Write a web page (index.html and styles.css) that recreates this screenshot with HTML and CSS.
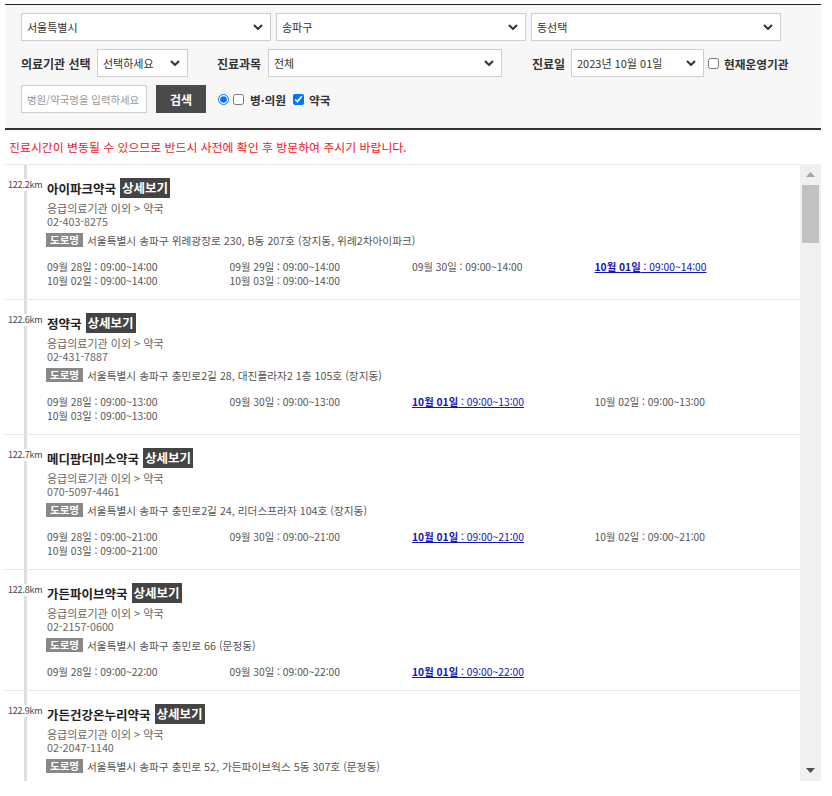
FILE: index.html
```html
<!DOCTYPE html>
<html lang="ko">
<head>
<meta charset="utf-8">
<title>의료기관 찾기</title>
<link rel="stylesheet" href="styles.css">
</head>
<body>
<div class="page">
  <form class="search">
    <div class="row">
      <select class="sel sel-region"><option>서울특별시</option></select>
      <select class="sel sel-region"><option>송파구</option></select>
      <select class="sel sel-region"><option>동선택</option></select>
    </div>
    <div class="row">
      <label class="lbl lbl-type">의료기관 선택</label>
      <select class="sel sel-type"><option>선택하세요</option></select>
      <label class="lbl lbl-dept">진료과목</label>
      <select class="sel sel-dept"><option>전체</option></select>
      <label class="lbl lbl-date">진료일</label>
      <select class="sel sel-date"><option>2023년 10월 01일</option></select>
      <input type="checkbox" class="chk chk-open" id="open">
      <label class="chk-text" for="open">현재운영기관</label>
    </div>
    <div class="row">
      <input type="text" class="txt" placeholder="병원/약국명을 입력하세요">
      <button type="button" class="btn">검색</button>
      <input type="radio" class="rad" checked>
      <input type="checkbox" class="chk chk-hosp" id="hosp">
      <label class="chk-text chk-text-hosp" for="hosp">병·의원</label>
      <input type="checkbox" class="chk chk-pharm" id="pharm" checked>
      <label class="chk-text" for="pharm">약국</label>
    </div>
  </form>

  <p class="notice">진료시간이 변동될 수 있으므로 반드시 사전에 확인 후 방문하여 주시기 바랍니다.</p>

  <div class="results">
    <ul class="list">
      <li class="item">
        <div class="item-body">
          <span class="dist">122.2km</span>
          <div class="title"><strong class="name">아이파크약국</strong><a class="detail">상세보기</a></div>
          <p class="cat">응급의료기관 이외 &gt; 약국</p>
          <p class="tel">02-403-8275</p>
          <p class="addr"><span class="road">도로명</span>서울특별시 송파구 위례광장로 230, B동 207호 (장지동, 위례2차아이파크)</p>
          <ul class="sched">
            <li>09월 28일 : 09:00~14:00</li>
            <li>09월 29일 : 09:00~14:00</li>
            <li>09월 30일 : 09:00~14:00</li>
            <li><a class="today"><b>10월 01일</b> : 09:00~14:00</a></li>
            <li>10월 02일 : 09:00~14:00</li>
            <li>10월 03일 : 09:00~14:00</li>
          </ul>
        </div>
      </li>
      <li class="item">
        <div class="item-body">
          <span class="dist">122.6km</span>
          <div class="title"><strong class="name">정약국</strong><a class="detail">상세보기</a></div>
          <p class="cat">응급의료기관 이외 &gt; 약국</p>
          <p class="tel">02-431-7887</p>
          <p class="addr"><span class="road">도로명</span>서울특별시 송파구 충민로2길 28, 대진플라자2 1층 105호 (장지동)</p>
          <ul class="sched">
            <li>09월 28일 : 09:00~13:00</li>
            <li>09월 30일 : 09:00~13:00</li>
            <li><a class="today"><b>10월 01일</b> : 09:00~13:00</a></li>
            <li>10월 02일 : 09:00~13:00</li>
            <li>10월 03일 : 09:00~13:00</li>
          </ul>
        </div>
      </li>
      <li class="item">
        <div class="item-body">
          <span class="dist">122.7km</span>
          <div class="title"><strong class="name">메디팜더미소약국</strong><a class="detail">상세보기</a></div>
          <p class="cat">응급의료기관 이외 &gt; 약국</p>
          <p class="tel">070-5097-4461</p>
          <p class="addr"><span class="road">도로명</span>서울특별시 송파구 충민로2길 24, 리더스프라자 104호 (장지동)</p>
          <ul class="sched">
            <li>09월 28일 : 09:00~21:00</li>
            <li>09월 30일 : 09:00~21:00</li>
            <li><a class="today"><b>10월 01일</b> : 09:00~21:00</a></li>
            <li>10월 02일 : 09:00~21:00</li>
            <li>10월 03일 : 09:00~21:00</li>
          </ul>
        </div>
      </li>
      <li class="item">
        <div class="item-body">
          <span class="dist">122.8km</span>
          <div class="title"><strong class="name">가든파이브약국</strong><a class="detail">상세보기</a></div>
          <p class="cat">응급의료기관 이외 &gt; 약국</p>
          <p class="tel">02-2157-0600</p>
          <p class="addr"><span class="road">도로명</span>서울특별시 송파구 충민로 66 (문정동)</p>
          <ul class="sched">
            <li>09월 28일 : 09:00~22:00</li>
            <li>09월 30일 : 09:00~22:00</li>
            <li><a class="today"><b>10월 01일</b> : 09:00~22:00</a></li>
          </ul>
        </div>
      </li>
      <li class="item">
        <div class="item-body">
          <span class="dist">122.9km</span>
          <div class="title"><strong class="name">가든건강온누리약국</strong><a class="detail">상세보기</a></div>
          <p class="cat">응급의료기관 이외 &gt; 약국</p>
          <p class="tel">02-2047-1140</p>
          <p class="addr"><span class="road">도로명</span>서울특별시 송파구 충민로 52, 가든파이브웍스 5동 307호 (문정동)</p>
        </div>
      </li>
    </ul>
    <div class="scrollbar" aria-hidden="true">
      <span class="sb-btn">
        <svg width="9" height="5" viewBox="0 0 9 5"><path d="M0 5L4.5 0 9 5z" fill="#a3a3a3"/></svg>
      </span>
      <span class="sb-track"><span class="sb-thumb"></span></span>
      <span class="sb-btn">
        <svg width="9" height="5" viewBox="0 0 9 5"><path d="M0 0h9L4.5 5z" fill="#505050"/></svg>
      </span>
    </div>
  </div>
</div>
</body>
</html>
```

FILE: styles.css
```css
* { box-sizing: border-box; }

body {
  margin: 0;
  background: #fff;
  color: #333;
  font-family: "Noto Sans CJK KR", "Noto Sans", sans-serif;
  font-size: 11px;
}

.page {
  padding: 4px 11px 0 5px;
}

/* ---------- search panel ---------- */
.search {
  background: #f7f7f7;
  border-top: 1px solid #222;
  border-bottom: 2px solid #333;
  padding: 8px 16px 15px;
  display: flex;
  flex-direction: column;
  gap: 8px;
}

.row {
  display: flex;
  align-items: center;
  height: 28px;
}

.sel {
  -webkit-appearance: none;
  appearance: none;
  height: 28px;
  border: 1px solid #cfcfcf;
  border-radius: 0;
  background: #fff url("data:image/svg+xml,%3Csvg xmlns='http://www.w3.org/2000/svg' width='10' height='6'%3E%3Cpath d='M1 1l4 4 4-4' fill='none' stroke='%23333' stroke-width='2'/%3E%3C/svg%3E") no-repeat right 7px center;
  background-size: 10px 6px;
  padding: 0 20px 0 5px;
  font-family: inherit;
  font-size: 11px;
  color: #333;
  outline: none;
}

.sel-region { width: 250px; margin-right: 5px; }
.sel-type { width: 91px; }
.sel-dept { width: 234px; }
.sel-date { width: 133px; }

.lbl {
  font-weight: bold;
  font-size: 12px;
  color: #333;
  white-space: nowrap;
}
.lbl-type { width: 76px; }
.lbl-dept { width: 51px; margin-left: 29px; }
.lbl-date { width: 39px; margin-left: 30px; }

.chk, .rad {
  width: 11px;
  height: 11px;
  margin: 0;
  flex: none;
}
.chk-open { margin-left: 4px; }
.rad { margin-left: 12px; }
.chk-hosp { margin-left: 4px; }
.chk-pharm { margin-left: 7px; }

.chk-text {
  font-weight: bold;
  font-size: 11.7px;
  color: #333;
  margin-left: 5px;
  white-space: nowrap;
}
.chk-text-hosp { margin-left: 6px; }

.txt {
  width: 126px;
  height: 28px;
  border: 1px solid #cfcfcf;
  background: #fff;
  padding: 0 3px 0 5px;
  font-family: inherit;
  font-size: 10.4px;
  color: #333;
  outline: none;
}
.txt::placeholder { color: #999; }

.btn {
  width: 50px;
  height: 28px;
  margin-left: 9px;
  border: 0;
  background: #4a4a4a;
  color: #fff;
  font-family: inherit;
  font-weight: bold;
  font-size: 12px;
  padding: 0;
}

/* ---------- notice ---------- */
.notice {
  margin: 0;
  padding: 9px 4px;
  line-height: 16px;
  color: #f0141e;
  font-size: 11.9px;
  white-space: nowrap;
}

/* ---------- result list ---------- */
.results {
  display: flex;
  height: 617px;
}

.list {
  flex: 1;
  min-width: 0;
  list-style: none;
  margin: 0;
  padding: 0;
  overflow: hidden;
  border-top: 1px solid #e8e8e8;
}

.scrollbar {
  width: 21px;
  flex: none;
  background: #f0f0f0;
  display: flex;
  flex-direction: column;
}
.sb-btn {
  height: 21px;
  flex: none;
  display: flex;
  align-items: center;
  justify-content: center;
}
.sb-btn svg { display: block; }
.sb-track {
  flex: 1;
  padding: 0 2px;
}
.sb-thumb {
  display: block;
  height: 58px;
  background: #c1c1c1;
}

.item {
  position: relative;
  border-bottom: 1px solid #e8e8e8;
  padding-left: 19px;
}

.item-body {
  border-left: 3px solid #dedede;
  padding: 13px 0 11px 20px;
}

.dist {
  position: absolute;
  left: 3px;
  top: 14px;
  background: #fff;
  font-size: 9px;
  line-height: 12px;
  color: #444;
  letter-spacing: -0.2px;
}

.title {
  display: flex;
  align-items: center;
  height: 20px;
}
.name {
  font-size: 12.5px;
  font-weight: bold;
  color: #222;
  margin-right: 4px;
}
.detail {
  background: #444;
  color: #fff;
  font-weight: bold;
  font-size: 12.5px;
  line-height: 20px;
  padding: 0 2px;
}

.cat, .tel {
  margin: 0;
  font-size: 11px;
  line-height: 14px;
  color: #666;
  white-space: nowrap;
}
.cat { margin-top: 3px; }
.tel { font-size: 10.7px; }

.addr {
  margin: 4px 0 0;
  display: flex;
  align-items: center;
  height: 14px;
  font-size: 10.7px;
  color: #555;
  white-space: nowrap;
}
.road {
  background: #888;
  color: #fff;
  font-weight: bold;
  font-size: 10.5px;
  line-height: 14px;
  padding: 0 4px;
  margin-left: -1px;
  margin-right: 4px;
}

.sched {
  list-style: none;
  margin: 13px 0 0;
  padding: 0;
  display: grid;
  grid-template-columns: repeat(4, 182.5px);
}
.sched li {
  font-size: 10.3px;
  line-height: 14px;
  color: #555;
  white-space: nowrap;
}
.today {
  color: #1414b8;
  text-decoration: underline;
}
.today b { font-weight: bold; }
```
